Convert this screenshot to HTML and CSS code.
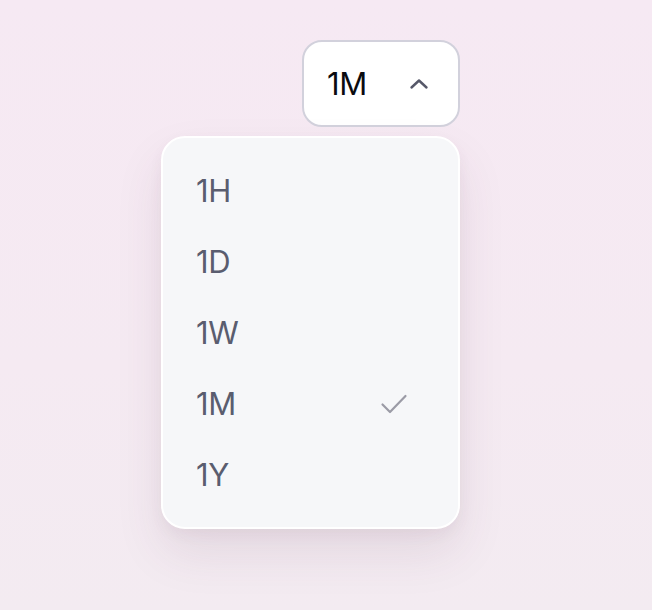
FILE: index.html
```html
<!DOCTYPE html>
<html lang="en">
<head>
<meta charset="utf-8">
<title>Timeframe select</title>
<link rel="stylesheet" href="styles.css">
</head>
<body>
<div class="picker">
  <button class="trigger" type="button">
    <span class="trigger-label">1M</span>
    <svg class="chevron" width="20" height="12" viewBox="0 0 20 12" fill="none">
      <path d="M2.5 9.5 L10 2.5 L17.5 9.5" stroke="#565869" stroke-width="2.4" stroke-linecap="round" stroke-linejoin="round"/>
    </svg>
  </button>
  <ul class="menu">
    <li class="option">1H</li>
    <li class="option">1D</li>
    <li class="option">1W</li>
    <li class="option selected">1M
      <svg class="check" width="28" height="22" viewBox="0 0 28 22" fill="none">
        <path d="M2.5 11.5 L10 19 L25.5 3" stroke="#9b9ba6" stroke-width="2.2" stroke-linecap="round" stroke-linejoin="round"/>
      </svg>
    </li>
    <li class="option">1Y</li>
  </ul>
</div>
</body>
</html>
```
FILE: styles.css
```css
html, body {
  margin: 0;
  padding: 0;
}
body {
  width: 652px;
  height: 610px;
  background: linear-gradient(180deg, #f6e9f3 0%, #f5eaf2 60%, #f3ebf1 100%);
  font-family: Inter, "Noto Sans", sans-serif;
  overflow: hidden;
}
.picker {
  width: 299px;
  margin: 40px 0 0 161px;
  display: flex;
  flex-direction: column;
  align-items: flex-end;
  gap: 9px;
}
.trigger {
  width: 158px;
  height: 87px;
  box-sizing: border-box;
  border: 2px solid #d2d1dc;
  border-radius: 20px;
  background: #ffffff;
  display: flex;
  align-items: center;
  justify-content: space-between;
  padding: 0 29px 0 23px;
  font-family: inherit;
  cursor: pointer;
}
.trigger-label {
  font-size: 31px;
  color: #0b0b10;
  letter-spacing: -0.3px;
}
.chevron {
  display: block;
}
.menu {
  list-style: none;
  margin: 0;
  width: 299px;
  box-sizing: border-box;
  padding: 17px 0;
  background: #f6f7f9;
  border: 2px solid #ffffff;
  border-radius: 24px;
  box-shadow: 0 24px 48px rgba(90, 50, 80, 0.10), 0 6px 14px rgba(90, 50, 80, 0.05);
}
.option {
  height: 71px;
  display: flex;
  align-items: center;
  justify-content: space-between;
  padding: 0 50px 0 33px;
  font-size: 31px;
  color: #5a5d6f;
  letter-spacing: -0.3px;
}
.check {
  display: block;
}
```
